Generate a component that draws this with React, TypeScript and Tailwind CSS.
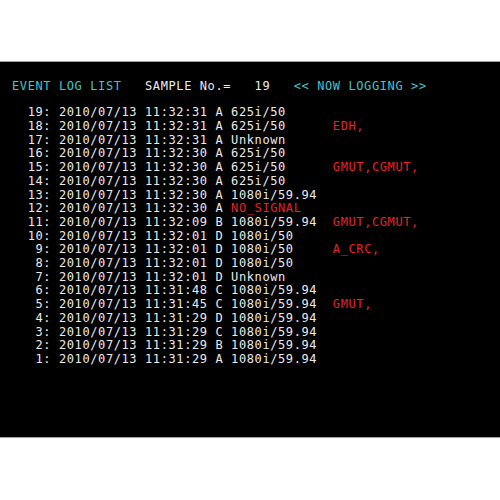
import React from 'react';

type Row = {
  no: number;
  time: string;
  ch: string;
  format: string;
  error?: string;
  formatRed?: boolean;
};

const rows: Row[] = [
  { no: 19, time: '11:32:31', ch: 'A', format: '625i/50' },
  { no: 18, time: '11:32:31', ch: 'A', format: '625i/50', error: 'EDH,' },
  { no: 17, time: '11:32:31', ch: 'A', format: 'Unknown' },
  { no: 16, time: '11:32:30', ch: 'A', format: '625i/50' },
  { no: 15, time: '11:32:30', ch: 'A', format: '625i/50', error: 'GMUT,CGMUT,' },
  { no: 14, time: '11:32:30', ch: 'A', format: '625i/50' },
  { no: 13, time: '11:32:30', ch: 'A', format: '1080i/59.94' },
  { no: 12, time: '11:32:30', ch: 'A', format: 'NO_SIGNAL', formatRed: true },
  { no: 11, time: '11:32:09', ch: 'B', format: '1080i/59.94', error: 'GMUT,CGMUT,' },
  { no: 10, time: '11:32:01', ch: 'D', format: '1080i/50' },
  { no: 9, time: '11:32:01', ch: 'D', format: '1080i/50', error: 'A_CRC,' },
  { no: 8, time: '11:32:01', ch: 'D', format: '1080i/50' },
  { no: 7, time: '11:32:01', ch: 'D', format: 'Unknown' },
  { no: 6, time: '11:31:48', ch: 'C', format: '1080i/59.94' },
  { no: 5, time: '11:31:45', ch: 'C', format: '1080i/59.94', error: 'GMUT,' },
  { no: 4, time: '11:31:29', ch: 'D', format: '1080i/59.94' },
  { no: 3, time: '11:31:29', ch: 'C', format: '1080i/59.94' },
  { no: 2, time: '11:31:29', ch: 'B', format: '1080i/59.94' },
  { no: 1, time: '11:31:29', ch: 'A', format: '1080i/59.94' },
];

export default function App() {
  return (
    <div className="w-[500px] h-[500px] bg-white flex flex-col">
      <div className="h-[61px] shrink-0" />
      <div
        className="h-[377px] shrink-0 bg-black border-y border-[#a0a0a0] pt-[18px] pl-[12px] text-[12px] leading-[13.7px] tracking-[0.6px] whitespace-pre text-[#ececec]"
        style={{ fontFamily: '"DejaVu Sans Mono", monospace' }}
      >
        {/* header line */}
        <div>
          <span className="text-[#3ec6d2]">EVENT LOG LIST</span>
          <span>{'   SAMPLE No.=   19   '}</span>
          <span className="text-[#3ec6d2]">{'<< NOW LOGGING >>'}</span>
        </div>

        {/* log rows */}
        <div className="mt-[12.6px] flex flex-col">
          {rows.map((r) => (
            <div key={r.no}>
              <span>{`${String(r.no).padStart(4, ' ')}: 2010/07/13 ${r.time} ${r.ch} `}</span>
              <span className={r.formatRed ? 'text-[#e8212b]' : ''}>{r.format.padEnd(13, ' ')}</span>
              {r.error && <span className="text-[#e8212b]">{r.error}</span>}
            </div>
          ))}
        </div>
      </div>
      <div className="flex-1" />
    </div>
  );
}
